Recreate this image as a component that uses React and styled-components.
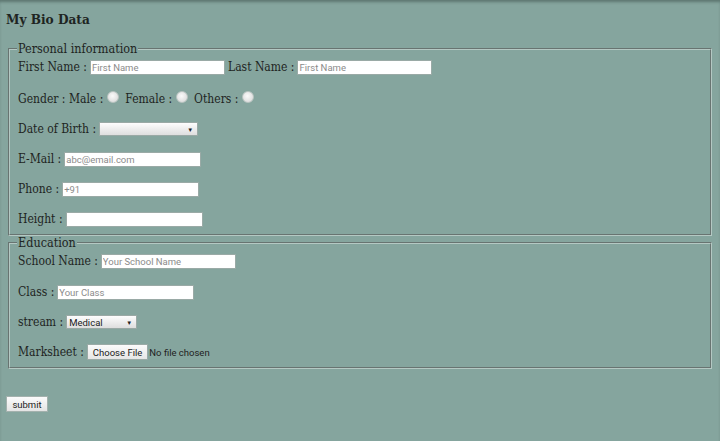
import styled, { createGlobalStyle } from 'styled-components';

const GlobalStyle = createGlobalStyle`
  html, body {
    margin: 0;
    padding: 0;
    background: #85a59e;
  }
  body {
    font-family: 'DejaVu Serif Condensed', 'DejaVu Serif', serif;
    font-size: 12px;
    color: #1e2422;
    min-height: 441px;
    box-shadow: inset 0 3px 3px -1px rgba(60, 80, 75, 0.55);
  }
`;

const Page = styled.div`
  padding: 6px 6px 20px 6px;
`;

const Title = styled.h3`
  font-size: 13.5px;
  font-weight: bold;
  margin: 5px 0 15px 0;
`;

const Fieldset = styled.fieldset`
  margin: 0 2px;
  padding: 0 9px 0 8px;
  border: 2px groove #b4c8c3;
`;

const Legend = styled.legend`
  padding: 0 1px;
  margin-left: -1px;
  font-size: 12.5px;
  line-height: 14px;
`;

const Row = styled.div`
  display: flex;
  align-items: center;
  gap: 3px;
  height: 30px;
  margin-top: ${(p) => p.$offset || 0}px;
`;

const Label = styled.span`
  white-space: nowrap;
`;

const TextInput = styled.input`
  width: ${(p) => p.$w || 135}px;
  height: 15px;
  box-sizing: border-box;
  border: 1px solid #9aaaa6;
  background: #fff;
  padding: 0 1px;
  font-family: Roboto, 'Liberation Sans', sans-serif;
  font-size: 9.5px;
  &::placeholder {
    color: #8b8b8b;
  }
`;

const Select = styled.div`
  width: ${(p) => p.$w}px;
  height: 14px;
  box-sizing: border-box;
  border: 1px solid #9aa9a5;
  background: linear-gradient(#fdfdfd, #dedede);
  display: flex;
  align-items: center;
  padding: 0 4px 0 2px;
  font-family: Roboto, 'Liberation Sans', sans-serif;
  font-size: 9.5px;
  color: #222;
`;

const SelectValue = styled.span`
  flex: 1;
`;

const Arrow = styled.span`
  font-size: 6px;
`;

const Radio = styled.span`
  display: inline-block;
  width: 10px;
  height: 10px;
  border-radius: 50%;
  background: radial-gradient(circle at 45% 40%, #fafafa, #d4d4d4);
  border: 1px solid #b9c4c1;
  margin: -4px 3px 0 1px;
`;

const FileButton = styled.button`
  height: 16px;
  padding: 0 5px;
  border: 1px solid #9aaaa6;
  background: linear-gradient(#fbfbfb, #e6e6e6);
  font-family: Roboto, 'Liberation Sans', sans-serif;
  font-size: 9.5px;
  color: #222;
`;

const FileNote = styled.span`
  font-family: Roboto, 'Liberation Sans', sans-serif;
  font-size: 9.5px;
  color: #222;
  margin-left: -2px;
`;

const Submit = styled.button`
  margin-top: 27px;
  height: 16px;
  width: 42px;
  padding: 0;
  border: 1px solid #a3b1ad;
  background: linear-gradient(#fbfbfb, #e4e4e4);
  font-family: Roboto, 'Liberation Sans', sans-serif;
  font-size: 9.5px;
  color: #222;
`;

function Dropdown({ width, value }) {
  return (
    <Select $w={width}>
      <SelectValue>{value}</SelectValue>
      <Arrow>▼</Arrow>
    </Select>
  );
}

export default function App() {
  return (
    <>
      <GlobalStyle />
      <Page>
        <Title>My Bio Data</Title>
        <Fieldset>
          <Legend>Personal information</Legend>
          <Row $offset={-4}>
            <Label>First Name :</Label>
            <TextInput placeholder="First Name" />
            <Label>Last Name :</Label>
            <TextInput placeholder="First Name" />
          </Row>
          <Row $offset={2}>
            <Label>Gender : Male :</Label>
            <Radio />
            <Label>Female :</Label>
            <Radio />
            <Label>Others :</Label>
            <Radio />
          </Row>
          <Row>
            <Label>Date of Birth :</Label>
            <Dropdown width={99} />
          </Row>
          <Row>
            <Label>E-Mail :</Label>
            <TextInput $w={137} placeholder="abc@email.com" />
          </Row>
          <Row>
            <Label>Phone :</Label>
            <TextInput $w={137} placeholder="+91" />
          </Row>
          <Row>
            <Label>Height :</Label>
            <TextInput $w={137} />
          </Row>
        </Fieldset>
        <Fieldset>
          <Legend>Education</Legend>
          <Row $offset={-4}>
            <Label>School Name :</Label>
            <TextInput placeholder="Your School Name" />
          </Row>
          <Row $offset={1}>
            <Label>Class :</Label>
            <TextInput $w={137} placeholder="Your Class" />
          </Row>
          <Row>
            <Label>stream :</Label>
            <Dropdown width={71} value="Medical" />
          </Row>
          <Row>
            <Label>Marksheet :</Label>
            <FileButton>Choose File</FileButton>
            <FileNote>No file chosen</FileNote>
          </Row>
        </Fieldset>
        <Submit>submit</Submit>
      </Page>
    </>
  );
}
